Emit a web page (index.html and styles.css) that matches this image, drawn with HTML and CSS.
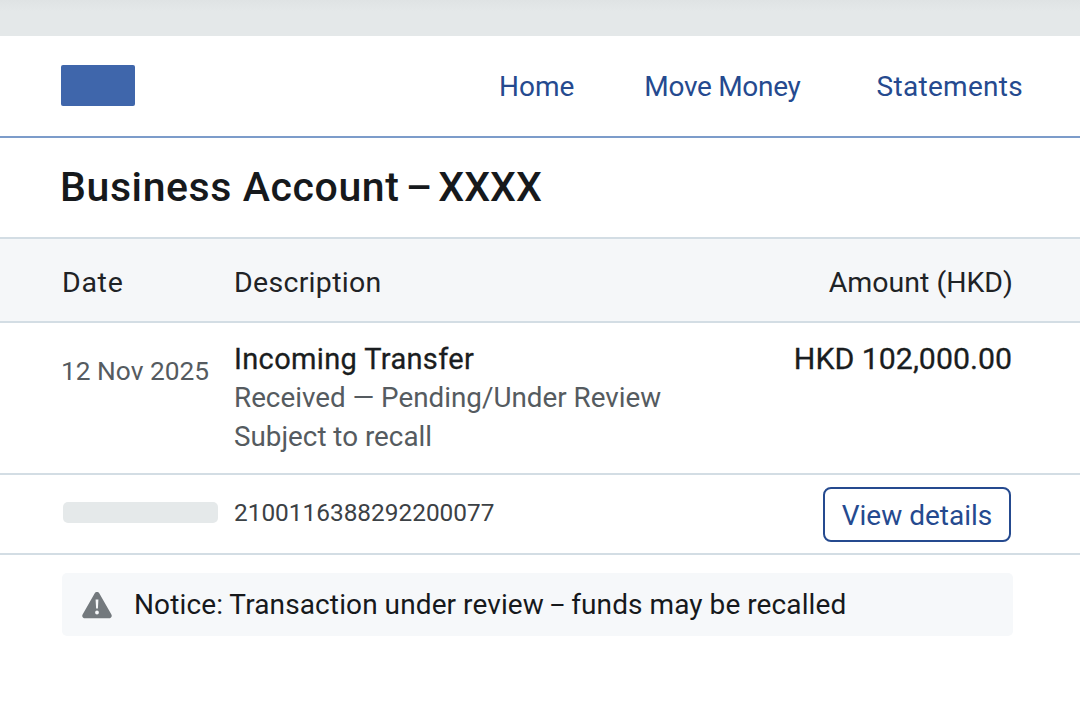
FILE: index.html
```html
<!DOCTYPE html>
<html lang="en">
<head>
<meta charset="utf-8">
<title>Business Account</title>
<link rel="stylesheet" href="styles.css">
</head>
<body>
<div class="topband"></div>
<header class="nav">
  <div class="logo"></div>
  <nav class="links">
    <a>Home</a>
    <a class="link-move">Move Money</a>
    <a class="link-statements">Statements</a>
  </nav>
</header>
<h1 class="title">Business Account<span class="title-tail"> – XXXX</span></h1>
<div class="thead">
  <span class="c-date">Date</span>
  <span class="c-desc">Description</span>
  <span class="c-amt">Amount (HKD)</span>
</div>
<div class="row">
  <div class="c-date date">12 Nov 2025</div>
  <div class="c-desc">
    <div class="tx">Incoming Transfer</div>
    <div class="sub">Received — Pending/Under Review</div>
    <div class="sub">Subject to recall</div>
  </div>
  <div class="c-amt money">HKD 102,000.00</div>
</div>
<div class="refrow">
  <div class="c-date"><div class="placeholder"></div></div>
  <div class="c-desc ref">2100116388292200077</div>
  <div class="c-amt"><button class="btn">View details</button></div>
</div>
<div class="notice">
  <svg class="warn" viewBox="0 0 32 28" width="32" height="28" aria-hidden="true">
    <path fill="#73797d" fill-rule="evenodd" d="M13.6 2.4c1.1-1.9 3.7-1.9 4.8 0l12 21c1 1.8-.2 3.8-2.4 3.8H4c-2.2 0-3.4-2-2.4-3.8zM14.6 8.6l.5 9h1.8l.5-9zM16 19.6a1.9 1.9 0 1 0 0 3.8 1.9 1.9 0 0 0 0-3.8z"/>
  </svg>
  <span>Notice: Transaction under review<span class="notice-dash"> – </span>funds may be recalled</span>
</div>
</body>
</html>
```
FILE: styles.css
```css
* { box-sizing: border-box; }
html, body { margin: 0; padding: 0; }
body {
  width: 1080px;
  height: 720px;
  overflow: hidden;
  background: #fff;
  font-family: Roboto, "Liberation Sans", sans-serif;
  color: #16191c;
}
.topband { height: 36px; background: linear-gradient(#dfe3e4, #e4e8e9 30%); }
.nav {
  height: 102px;
  padding: 0 57px 0 61px;
  display: flex;
  align-items: center;
  justify-content: space-between;
  border-bottom: 2px solid #7c9cca;
}
.logo { width: 74px; height: 41px; margin-top: -1px; background: #3f66ab; border-radius: 2px; }
.links { display: flex; gap: 70px; margin-top: 1px; }
.links a { font-size: 28px; color: #254a8f; }
.links .link-move { letter-spacing: -.3px; }
.links .link-statements { letter-spacing: .3px; margin-left: 6px; }
.title {
  margin: 0;
  height: 99px;
  padding: 26px 0 0 60px;
  font-size: 41px;
  line-height: 46px;
  font-weight: 500;
  letter-spacing: .6px;
  color: #16191c;
}
.title-tail { word-spacing: -4px; letter-spacing: 0; }
.thead, .row, .refrow {
  display: grid;
  grid-template-columns: 172px 1fr auto;
  padding: 0 68px 0 62px;
}
.thead {
  height: 86px;
  padding-top: 5px;
  padding-right: 67px;
  align-items: center;
  background: #f5f7f9;
  border-top: 2px solid #d3dde4;
  border-bottom: 2px solid #d3dde4;
  font-size: 28.5px;
  color: #1f2326;
}
.thead .c-date { letter-spacing: .7px; }
.thead .c-desc { letter-spacing: .3px; }
.row { height: 152px; padding-top: 18px; border-bottom: 2px solid #d3dde4; }
.date { font-size: 26.3px; color: #555b60; padding-top: 15px; margin-left: -1px; }
.tx { font-size: 29px; line-height: 36px; -webkit-text-stroke: .3px #1a1d20; letter-spacing: .35px; margin-bottom: 2px; color: #1a1d20; }
.sub { font-size: 27.8px; line-height: 38.5px; color: #555b60; }
.money { font-size: 30.3px; line-height: 36px; -webkit-text-stroke: .3px #1a1d20; color: #1a1d20; }
.refrow { height: 80px; align-items: center; border-bottom: 2px solid #d3dde4; }
.placeholder { width: 155px; height: 21px; margin-top: -4px; margin-left: 1px; background: #e5e9ea; border-radius: 5px; }
.ref { font-size: 24.4px; color: #3c4145; margin-top: -4px; }
.btn {
  width: 188px;
  height: 55px;
  margin: 1px 1px 0 0;
  padding: 2px 0 0;
  background: #fff;
  border: 2.5px solid #254a8f;
  border-radius: 8px;
  font-family: inherit;
  font-size: 28px;
  color: #254a8f;
}
.notice {
  margin: 18px 67px 0 62px;
  height: 63px;
  padding-left: 19px;
  display: flex;
  align-items: center;
  gap: 21px;
  background: #f6f8fa;
  border-radius: 5px;
  font-size: 28px;
  letter-spacing: .12px;
  word-spacing: -.2px;
  color: #16191c;
}
.notice-dash { font-size: 25px; word-spacing: -1px; }
.warn { flex: none; }
```
